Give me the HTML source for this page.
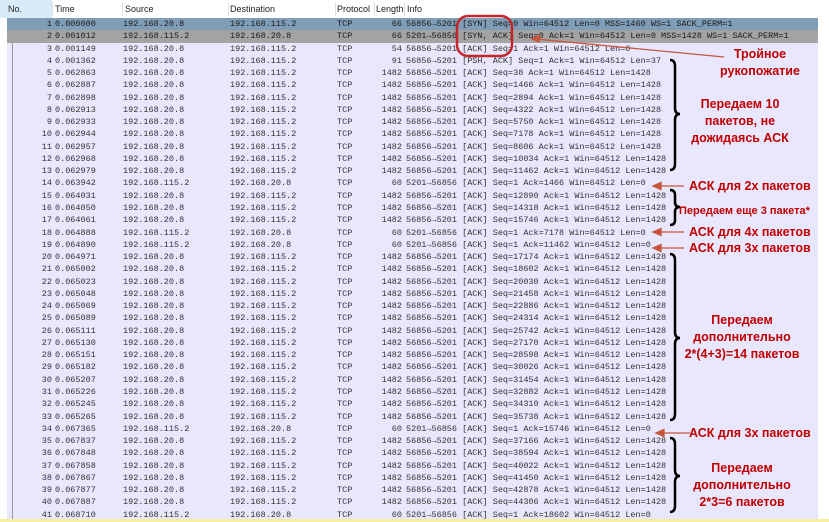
<!DOCTYPE html>
<html><head><meta charset="utf-8"><style>
body{margin:0;width:829px;height:522px;overflow:hidden;background:#fff;position:relative;font-family:"Liberation Sans",sans-serif}
.hdr{position:absolute;top:0;left:0;width:829px;height:18px;font-size:9px;color:#222}
.hdr span{position:absolute;top:4px}
.hdr i{position:absolute;top:2px;width:1px;height:14px;background:#e0e0e0}
#rows{position:absolute;top:18px;left:7px;width:811px}
.r{height:12.28px;background:#e8e7fe;position:relative;font-family:"Liberation Mono",monospace;font-size:8.5px;color:#333;white-space:pre;line-height:12.28px}
.r span{position:absolute;top:0}
.s1{background:#7f9db6;color:#1a1a1a}
.s2{background:#a3a3a3;color:#1a1a1a}
.n{right:766px;text-align:right}
.t{left:48px}.src{left:116px}.dst{left:223px}.p{left:330px}
.l{right:416px;text-align:right}
.i{left:399px}
.a{position:absolute;color:#c00000;font-weight:bold;font-size:12.5px;text-align:center;line-height:17px;white-space:nowrap}
</style></head><body>
<div class="hdr">
<div style="position:absolute;left:0;top:0;width:52px;height:18px;background:#d9ebf9"></div>
<span style="left:8px">No.</span><i style="left:52px"></i>
<span style="left:55px">Time</span><i style="left:122px"></i>
<span style="left:125px">Source</span><i style="left:228px"></i>
<span style="left:230px">Destination</span><i style="left:335px"></i>
<span style="left:337px">Protocol</span><i style="left:374px"></i>
<span style="left:376px">Length</span><i style="left:404px"></i>
<span style="left:407px">Info</span>
</div>
<div id="rows"></div>
<div style="position:absolute;left:12px;top:42px;width:1px;height:478px;background:#9a9a9a"></div>
<div style="position:absolute;left:0;top:519px;width:829px;height:3px;background:#f4f0a0"></div>
<svg width="829" height="522" style="position:absolute;left:0;top:0">
<rect x="457" y="16" width="55" height="40" rx="11" fill="none" stroke="#c4262b" stroke-width="2.5"/>
<g stroke="#c8553a" stroke-width="1.3" fill="#c8553a">
<line x1="724" y1="57" x2="536" y2="39"/><polygon points="532,39 540,35 539,42"/>
<line x1="684" y1="186" x2="658" y2="186"/><polygon points="653,186 661,182.5 661,189.5"/>
<line x1="684" y1="232" x2="658" y2="232"/><polygon points="653,232 661,228.5 661,235.5"/>
<line x1="684" y1="248" x2="658" y2="248"/><polygon points="653,248 661,244.5 661,251.5"/>
<line x1="690" y1="433" x2="661" y2="433"/><polygon points="656,433 664,429.5 664,436.5"/>
</g>
<g stroke="#000" stroke-width="2.5" fill="none">
<path d="M670,60 Q675,60 675,66 L675,108 Q675,114 680,114 Q675,114 675,120 L675,164 Q675,170 670,170"/>
<path d="M670,190 Q675,190 675,195 L675,202 Q675,207 680,207 Q675,207 675,212 L675,220 Q675,225 670,225"/>
<path d="M670,254 Q675,254 675,260 L675,332 Q675,338 680,338 Q675,338 675,344 L675,414 Q675,420 670,420"/>
<path d="M670,438 Q675,438 675,444 L675,470 Q675,476 680,476 Q675,476 675,482 L675,506 Q675,512 670,512"/>
</g>
</svg>
<div class="a" style="left:705px;top:46px;width:110px">Тройное<br>рукопожатие</div>
<div class="a" style="left:680px;top:96px;width:120px">Передаем 10<br>пакетов, не<br>дожидаясь АСК</div>
<div class="a" style="left:689px;top:178px">АСК для 2x пакетов</div>
<div class="a" style="left:679px;top:203px;font-size:11px">Передаем еще 3 пакета*</div>
<div class="a" style="left:689px;top:224px">АСК для 4x пакетов</div>
<div class="a" style="left:689px;top:240px">АСК для 3x пакетов</div>
<div class="a" style="left:682px;top:312px;width:120px">Передаем<br>дополнительно<br>2*(4+3)=14 пакетов</div>
<div class="a" style="left:689px;top:425px">АСК для 3x пакетов</div>
<div class="a" style="left:682px;top:460px;width:120px">Передаем<br>дополнительно<br>2*3=6 пакетов</div>
<script>
var A="192.168.20.8",B="192.168.115.2";
var t=["0.000000","0.001012","0.001149","0.001362","0.062863","0.062887","0.062898","0.062913","0.062933","0.062944","0.062957","0.062968","0.062979","0.063942","0.064031","0.064050","0.064061","0.064888","0.064890","0.064971","0.065002","0.065023","0.065048","0.065069","0.065089","0.065111","0.065130","0.065151","0.065182","0.065207","0.065226","0.065245","0.065265","0.067365","0.067837","0.067848","0.067858","0.067867","0.067877","0.067887","0.068710"];
var acks={14:1466,18:7178,19:11462,34:15746,41:18602};
var h="",seq=38;
for(var n=1;n<=41;n++){
 var s=A,d=B,len=1482,info,cls="";
 if(n==1){len=66;info="56856→5201 [SYN] Seq=0 Win=64512 Len=0 MSS=1460 WS=1 SACK_PERM=1";cls="s1";}
 else if(n==2){s=B;d=A;len=66;info="5201→56856 [SYN, ACK] Seq=0 Ack=1 Win=64512 Len=0 MSS=1428 WS=1 SACK_PERM=1";cls="s2";}
 else if(n==3){len=54;info="56856→5201 [ACK] Seq=1 Ack=1 Win=64512 Len=0";}
 else if(n==4){len=91;info="56856→5201 [PSH, ACK] Seq=1 Ack=1 Win=64512 Len=37";}
 else if(acks[n]){s=B;d=A;len=60;info="5201→56856 [ACK] Seq=1 Ack="+acks[n]+" Win=64512 Len=0";}
 else {info="56856→5201 [ACK] Seq="+seq+" Ack=1 Win=64512 Len=1428";seq+=1428;}
 h+='<div class="r '+cls+'"><span class="n">'+n+'</span><span class="t">'+t[n-1]+'</span><span class="src">'+s+'</span><span class="dst">'+d+'</span><span class="p">TCP</span><span class="l">'+len+'</span><span class="i">'+info+'</span></div>';
}
document.getElementById("rows").innerHTML=h;
</script>
</body></html>
